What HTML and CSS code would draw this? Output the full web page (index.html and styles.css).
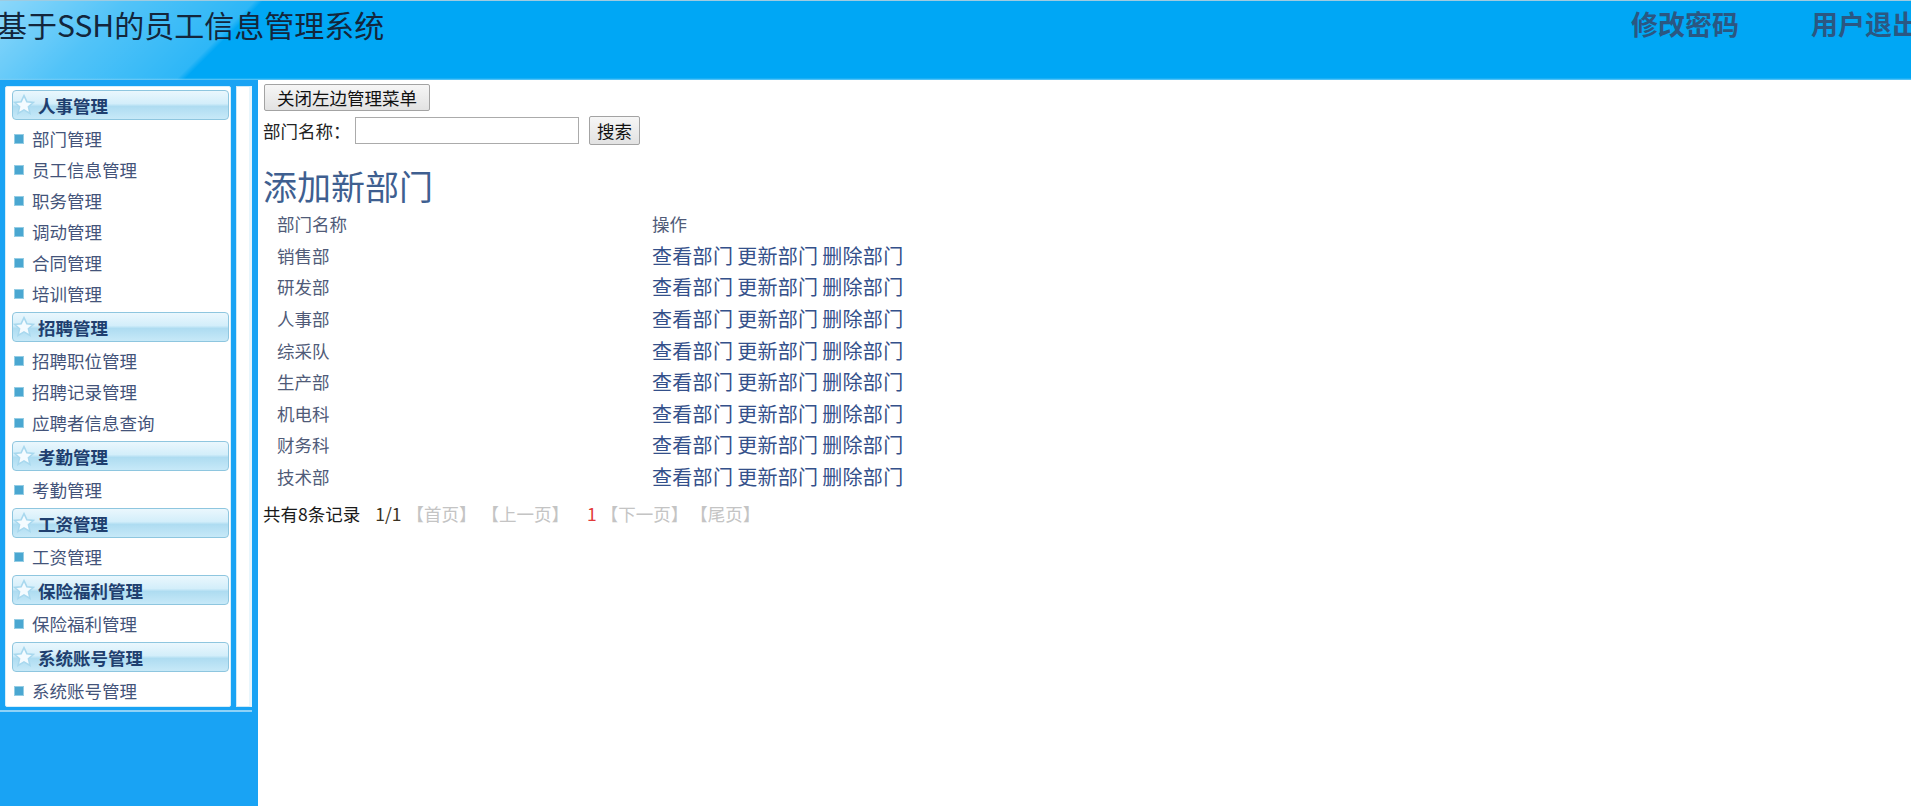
FILE: index.html
```html
<!DOCTYPE html>
<html lang="zh-CN">
<head>
<meta charset="utf-8">
<title>基于SSH的员工信息管理系统</title>
<link rel="stylesheet" href="styles.css">
</head>
<body>
<div class="page">
  <header class="header">
    <div class="site-title">基于SSH的员工信息管理系统</div>
    <nav class="top-nav">
      <a class="top-link">修改密码</a>
      <a class="top-link">用户退出</a>
    </nav>
  </header>
  <div class="main">
    <aside class="sidebar">
      <div class="side-cols">
        <div class="panel">
          <div class="menu-head"><svg class="star" viewBox="0 0 20 20"><path d="M10 1.5 L12.6 7 L18.6 7.6 L14 11.6 L15.4 17.6 L10 14.5 L4.6 17.6 L6 11.6 L1.4 7.6 L7.4 7 Z"/></svg><span>人事管理</span></div>
          <div class="menu-item"><i class="bullet"></i>部门管理</div>
          <div class="menu-item"><i class="bullet"></i>员工信息管理</div>
          <div class="menu-item"><i class="bullet"></i>职务管理</div>
          <div class="menu-item"><i class="bullet"></i>调动管理</div>
          <div class="menu-item"><i class="bullet"></i>合同管理</div>
          <div class="menu-item"><i class="bullet"></i>培训管理</div>
          <div class="menu-head"><svg class="star" viewBox="0 0 20 20"><path d="M10 1.5 L12.6 7 L18.6 7.6 L14 11.6 L15.4 17.6 L10 14.5 L4.6 17.6 L6 11.6 L1.4 7.6 L7.4 7 Z"/></svg><span>招聘管理</span></div>
          <div class="menu-item"><i class="bullet"></i>招聘职位管理</div>
          <div class="menu-item"><i class="bullet"></i>招聘记录管理</div>
          <div class="menu-item"><i class="bullet"></i>应聘者信息查询</div>
          <div class="menu-head"><svg class="star" viewBox="0 0 20 20"><path d="M10 1.5 L12.6 7 L18.6 7.6 L14 11.6 L15.4 17.6 L10 14.5 L4.6 17.6 L6 11.6 L1.4 7.6 L7.4 7 Z"/></svg><span>考勤管理</span></div>
          <div class="menu-item"><i class="bullet"></i>考勤管理</div>
          <div class="menu-head"><svg class="star" viewBox="0 0 20 20"><path d="M10 1.5 L12.6 7 L18.6 7.6 L14 11.6 L15.4 17.6 L10 14.5 L4.6 17.6 L6 11.6 L1.4 7.6 L7.4 7 Z"/></svg><span>工资管理</span></div>
          <div class="menu-item"><i class="bullet"></i>工资管理</div>
          <div class="menu-head"><svg class="star" viewBox="0 0 20 20"><path d="M10 1.5 L12.6 7 L18.6 7.6 L14 11.6 L15.4 17.6 L10 14.5 L4.6 17.6 L6 11.6 L1.4 7.6 L7.4 7 Z"/></svg><span>保险福利管理</span></div>
          <div class="menu-item"><i class="bullet"></i>保险福利管理</div>
          <div class="menu-head"><svg class="star" viewBox="0 0 20 20"><path d="M10 1.5 L12.6 7 L18.6 7.6 L14 11.6 L15.4 17.6 L10 14.5 L4.6 17.6 L6 11.6 L1.4 7.6 L7.4 7 Z"/></svg><span>系统账号管理</span></div>
          <div class="menu-item"><i class="bullet"></i>系统账号管理</div>
        </div>
        <div class="scroll-col"></div>
      </div>
      <div class="side-line"></div>
    </aside>
    <section class="content">
      <button class="btn btn-toggle" type="button">关闭左边管理菜单</button>
      <div class="search-row">
        <label class="search-label">部门名称：</label>
        <input class="search-input" type="text">
        <button class="btn btn-search" type="button">搜索</button>
      </div>
      <h2 class="page-title">添加新部门</h2>
      <table class="dept-table">
        <tr><td class="c-name">部门名称</td><td class="c-op">操作</td></tr>
        <tr><td class="c-name">销售部</td><td class="c-op"><a class="op">查看部门</a> <a class="op">更新部门</a> <a class="op">删除部门</a></td></tr>
        <tr><td class="c-name">研发部</td><td class="c-op"><a class="op">查看部门</a> <a class="op">更新部门</a> <a class="op">删除部门</a></td></tr>
        <tr><td class="c-name">人事部</td><td class="c-op"><a class="op">查看部门</a> <a class="op">更新部门</a> <a class="op">删除部门</a></td></tr>
        <tr><td class="c-name">综采队</td><td class="c-op"><a class="op">查看部门</a> <a class="op">更新部门</a> <a class="op">删除部门</a></td></tr>
        <tr><td class="c-name">生产部</td><td class="c-op"><a class="op">查看部门</a> <a class="op">更新部门</a> <a class="op">删除部门</a></td></tr>
        <tr><td class="c-name">机电科</td><td class="c-op"><a class="op">查看部门</a> <a class="op">更新部门</a> <a class="op">删除部门</a></td></tr>
        <tr><td class="c-name">财务科</td><td class="c-op"><a class="op">查看部门</a> <a class="op">更新部门</a> <a class="op">删除部门</a></td></tr>
        <tr><td class="c-name">技术部</td><td class="c-op"><a class="op">查看部门</a> <a class="op">更新部门</a> <a class="op">删除部门</a></td></tr>
      </table>
      <div class="pager">
        <span class="pg-total">共有8条记录</span>
        <span class="pg-count">1/1</span>
        <span class="pg-off">【首页】</span>
        <span class="pg-off">【上一页】</span>
        <span class="pg-cur">1</span>
        <span class="pg-off">【下一页】</span>
        <span class="pg-off pg-last">【尾页】</span>
      </div>
    </section>
  </div>
</div>
</body>
</html>
```
FILE: styles.css
```css
* { box-sizing: border-box; }
html, body { margin: 0; padding: 0; }
body {
  width: 1911px;
  height: 806px;
  overflow: hidden;
  background: #fff;
  font-family: "Noto Sans CJK SC", "Microsoft YaHei", sans-serif;
  font-size: 17.5px;
  color: #333;
}
.page { display: flex; flex-direction: column; height: 806px; }

/* header */
.header {
  height: 80px;
  flex: none;
  display: flex;
  justify-content: space-between;
  align-items: flex-start;
  overflow: hidden;
  border-top: 1px solid #9fcbe0;
  background:
    linear-gradient(to top, rgba(120,205,245,0.9) 0, rgba(120,205,245,0) 2px),
    linear-gradient(135deg, rgba(255,255,255,0.55) 0, rgba(255,255,255,0.32) 90px, rgba(255,255,255,0.18) 180px, rgba(255,255,255,0.0) 186px),
    #00a7f5;
}
.site-title {
  margin-left: -3px;
  font-size: 30px;
  line-height: 46px;
  color: #13263c;
  white-space: nowrap;
}
.top-nav {
  display: flex;
  gap: 72px;
  margin-right: -8px;
  white-space: nowrap;
}
.top-link {
  font-size: 27px;
  font-weight: bold;
  line-height: 46px;
  color: #2b5782;
}

.main { flex: 1; display: flex; min-height: 0; }

/* sidebar */
.sidebar {
  width: 258px;
  flex: none;
  background: #19a3f4;
  padding-top: 6px;
}
.side-cols { display: flex; align-items: stretch; }
.panel {
  margin-left: 5px;
  width: 226px;
  background: #fff;
  border: 1px solid #d6eefa;
  border-radius: 2px;
}
.scroll-col {
  margin-left: 5px;
  width: 16px;
  background: #fff;
  border: 1px solid #cfeaf8;
  border-right-width: 3px;
  border-right-color: #e8f6fd;
}
.side-line {
  margin-top: 3px;
  width: 252px;
  height: 2px;
  background: #8fd2f7;
}
.menu-head {
  height: 30px;
  margin: 3px 1px 3px 6px;
  display: flex;
  align-items: center;
  border: 1px solid #8ec6df;
  border-radius: 4px;
  background: linear-gradient(to bottom, #eaf7fd 0%, #d3eefa 45%, #aedcf1 55%, #c7e9f8 100%);
  font-weight: bold;
  color: #1f3f6f;
}
.star {
  width: 22px;
  height: 22px;
  margin-left: 0;
  margin-right: 3px;
  fill: #f4fbff;
  stroke: #a8d8ee;
  stroke-width: 1.4;
}
.menu-item {
  height: 31px;
  display: flex;
  align-items: center;
  padding-left: 8px;
  color: #44547a;
  white-space: nowrap;
}
.bullet {
  width: 10px;
  height: 10px;
  margin-right: 8px;
  background: #4aa7d1;
  border: 1px solid #95cde4;
  flex: none;
}

/* content */
.content {
  flex: 1;
  padding: 4px 0 0 5px;
}
.btn {
  font-family: inherit;
  font-size: 17.5px;
  color: #111;
  background: linear-gradient(to bottom, #f6f6f6, #e2e2e2);
  border: 1px solid #a3a3a3;
  border-radius: 2px;
  padding: 0;
  display: flex;
  align-items: center;
  justify-content: center;
}
.btn-toggle { height: 27px; width: 166px; margin-left: 1px; }
.search-row {
  margin-top: 5px;
  display: flex;
  align-items: center;
  height: 29px;
}
.search-label { color: #222; width: 92px; }
.search-input {
  width: 224px;
  height: 27px;
  border: 1px solid #ababab;
  background: #fff;
}
.btn-search { width: 51px; height: 29px; margin-left: 10px; }
.page-title {
  margin: 20px 0 0 0;
  font-size: 34px;
  font-weight: normal;
  line-height: 42px;
  color: #3f5f90;
}
.dept-table {
  margin-top: 1px;
  border-collapse: collapse;
  table-layout: fixed;
}
.dept-table td {
  height: 31.6px;
  padding: 0 0 0 14px;
  white-space: nowrap;
  vertical-align: middle;
}
.c-name { width: 375px; color: #505b78; }
.c-op { color: #505b78; }
.op { color: #34508a; font-size: 20px; letter-spacing: 0.3px; }
.pager {
  margin-top: 8px;
  display: flex;
  align-items: center;
  gap: 5px;
  height: 26px;
}
.pg-total { color: #1a1a1a; margin-right: 10px; }
.pg-count { color: #3a3222; }
.pg-off { color: #c4c4c4; }
.pg-cur { color: #e23a3a; margin-left: 13px; margin-right: -1px; }
.pg-last { margin-left: -3px; }
```
